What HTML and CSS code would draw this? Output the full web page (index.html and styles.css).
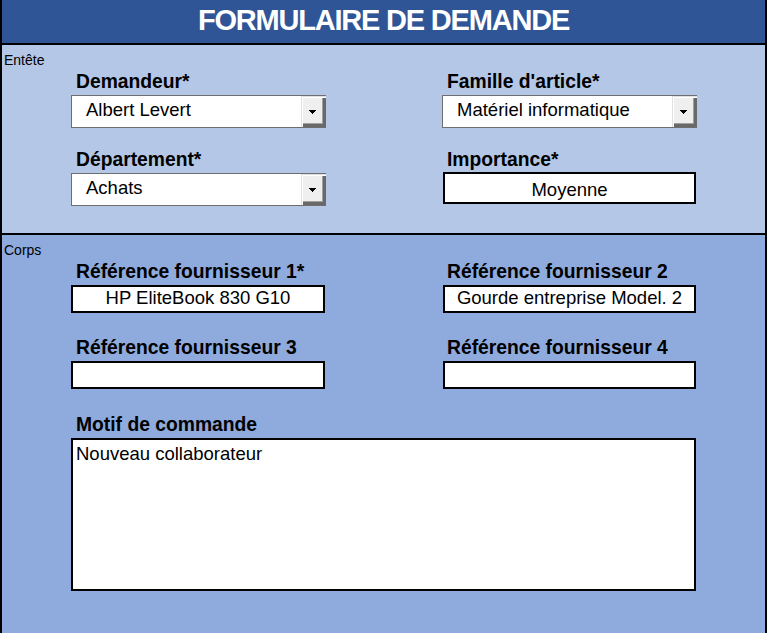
FILE: index.html
```html
<!DOCTYPE html>
<html lang="fr">
<head>
<meta charset="utf-8">
<title>Formulaire de demande</title>
<link rel="stylesheet" href="styles.css">
</head>
<body>
<div class="sheet">
  <header class="title-bar">FORMULAIRE DE DEMANDE</header>

  <section class="block block-head">
    <div class="tag">Entête</div>
    <div class="fields">
      <div class="field">
        <div class="label">Demandeur*</div>
        <div class="combo">
          <span class="combo-value">Albert Levert</span>
          <span class="combo-btn"><svg width="7" height="4" viewBox="0 0 7 4" shape-rendering="crispEdges"><path d="M0 0h7v1h-1v1h-1v1h-1v1h-1v-1h-1v-1h-1v-1h-1z" fill="#000"/></svg></span>
        </div>
      </div>
      <div class="field">
        <div class="label">Famille d'article*</div>
        <div class="combo">
          <span class="combo-value">Matériel informatique</span>
          <span class="combo-btn"><svg width="7" height="4" viewBox="0 0 7 4" shape-rendering="crispEdges"><path d="M0 0h7v1h-1v1h-1v1h-1v1h-1v-1h-1v-1h-1v-1h-1z" fill="#000"/></svg></span>
        </div>
      </div>
      <div class="field">
        <div class="label">Département*</div>
        <div class="combo">
          <span class="combo-value">Achats</span>
          <span class="combo-btn"><svg width="7" height="4" viewBox="0 0 7 4" shape-rendering="crispEdges"><path d="M0 0h7v1h-1v1h-1v1h-1v1h-1v-1h-1v-1h-1v-1h-1z" fill="#000"/></svg></span>
        </div>
      </div>
      <div class="field">
        <div class="label">Importance*</div>
        <div class="box box-imp">Moyenne</div>
      </div>
    </div>
  </section>

  <section class="block block-body">
    <div class="tag">Corps</div>
    <div class="fields fields-body">
      <div class="field">
        <div class="label">Référence fournisseur 1*</div>
        <div class="box box-ref">HP EliteBook 830 G10</div>
      </div>
      <div class="field field-right">
        <div class="label">Référence fournisseur 2</div>
        <div class="box box-ref">Gourde entreprise Model. 2</div>
      </div>
      <div class="field">
        <div class="label">Référence fournisseur 3</div>
        <div class="box box-ref"></div>
      </div>
      <div class="field field-right">
        <div class="label">Référence fournisseur 4</div>
        <div class="box box-ref"></div>
      </div>
      <div class="field field-wide">
        <div class="label">Motif de commande</div>
        <div class="box box-text">Nouveau collaborateur</div>
      </div>
    </div>
  </section>
</div>
</body>
</html>
```

FILE: styles.css
```css
* { box-sizing: border-box; }

html, body {
  margin: 0;
  padding: 0;
}

body {
  font-family: "Liberation Sans", Arial, sans-serif;
  color: #000;
  background: #8faadc;
}

.sheet {
  width: 767px;
  min-height: 100vh;
  border-left: 2px solid #000;
  border-right: 2px solid #000;
  display: flex;
  flex-direction: column;
}

.title-bar {
  height: 45px;
  background: #2f5597;
  border-bottom: 2px solid #000;
  color: #fff;
  font-weight: bold;
  font-size: 29px;
  letter-spacing: -1.2px;
  line-height: 40px;
  text-align: center;
}

.block {
  padding-bottom: 27px;
}

.block-head {
  background: #b4c7e7;
  border-bottom: 2px solid #000;
}

.block-body {
  background: #8faadc;
  flex: 1;
}

.tag {
  font-size: 14px;
  line-height: 16px;
  padding: 7px 0 0 2px;
}

.fields {
  margin-top: 3px;
  padding-left: 69px;
  display: grid;
  grid-template-columns: 255px 255px;
  column-gap: 116px;
  row-gap: 21px;
}

.fields-body {
  row-gap: 24px;
}

.label {
  font-weight: bold;
  font-size: 19.3px;
  line-height: 22px;
  height: 22px;
  padding-left: 5px;
  margin-bottom: 2px;
  white-space: nowrap;
}

.combo {
  height: 33px;
  display: flex;
  background: #fff;
  border: 1px solid #6e6e6e;
  border-right: 0;
}

.combo-value {
  flex: 1;
  font-size: 18.5px;
  line-height: 27px;
  padding-left: 14px;
  white-space: nowrap;
}

.combo-btn {
  width: 25px;
  background: #efefef;
  display: flex;
  align-items: center;
  justify-content: center;
  padding: 1px 3px 0 1px;
  box-shadow:
    inset 1px 1px 0 #e0e0e0,
    inset 2px 2px 0 #fff,
    inset -3px -3px 0 #696969,
    inset -4px -4px 0 #a0a0a0;
}

.combo-btn svg { display: block; }

.box {
  background: #fff;
  border: 2px solid #000;
  font-size: 18.5px;
  white-space: nowrap;
}

.box-imp {
  height: 32px;
  margin-top: -1px;
  margin-left: 1px;
  width: 253px;
  text-align: center;
  line-height: 25px;
  padding-top: 3px;
}

.box-ref {
  height: 28px;
  width: 254px;
  text-align: center;
  line-height: 22px;
}

.field-right .box-ref {
  margin-left: 1px;
  width: 253px;
}

.field-wide {
  grid-column: 1 / 3;
  margin-top: 1px;
}

.box-text {
  width: 625px;
  height: 153px;
  line-height: 23px;
  padding: 2px 3px 0;
  white-space: normal;
}
```
